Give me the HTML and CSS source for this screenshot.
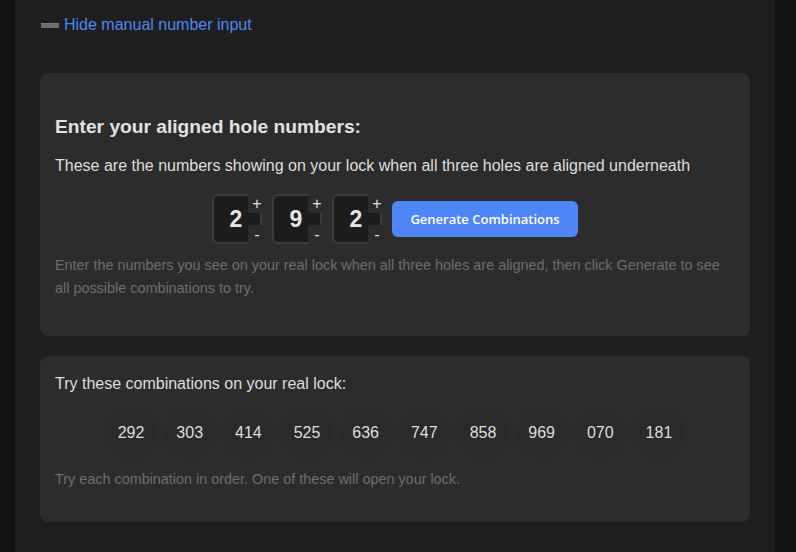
FILE: index.html
```html
<!DOCTYPE html>
<html>
<head>
<meta charset="utf-8">
<link rel="stylesheet" href="styles.css">
</head>
<body>
<div class="page">
  <div class="toggle"><span class="minus-icon"></span><span class="toggle-link">Hide manual number input</span></div>

  <section class="card card-input">
    <h3 class="title">Enter your aligned hole numbers:</h3>
    <p class="lead">These are the numbers showing on your lock when all three holes are aligned underneath</p>
    <div class="dial-row">
      <div class="dial"><span class="digit">2</span><span class="btn-up">+</span><span class="btn-down">-</span></div>
      <div class="dial"><span class="digit">9</span><span class="btn-up">+</span><span class="btn-down">-</span></div>
      <div class="dial"><span class="digit">2</span><span class="btn-up">+</span><span class="btn-down">-</span></div>
      <button class="generate">Generate Combinations</button>
    </div>
    <p class="help">Enter the numbers you see on your real lock when all three holes are aligned, then click Generate to see all possible combinations to try.</p>
  </section>

  <section class="card card-results">
    <p class="lead lead-results">Try these combinations on your real lock:</p>
    <div class="combos">
      <span class="combo">292</span>
      <span class="combo">303</span>
      <span class="combo">414</span>
      <span class="combo">525</span>
      <span class="combo">636</span>
      <span class="combo">747</span>
      <span class="combo">858</span>
      <span class="combo">969</span>
      <span class="combo">070</span>
      <span class="combo">181</span>
    </div>
    <p class="help help-results">Try each combination in order. One of these will open your lock.</p>
  </section>
</div>
</body>
</html>
```

FILE: styles.css
```css
html, body {
  margin: 0;
  padding: 0;
  background: #121212;
  font-family: "Liberation Sans", Arial, sans-serif;
  color: #dcdcdc;
  overflow: hidden;
}

.page {
  margin-left: 15px;
  width: 710px;
  height: 552px;
  padding: 0 25px;
  background: #1e1e1e;
  box-sizing: content-box;
  overflow: hidden;
}

.toggle {
  display: flex;
  align-items: center;
  height: 48px;
  font-size: 16px;
  padding-top: 2px;
  box-sizing: border-box;
}

.minus-icon {
  display: inline-block;
  width: 18px;
  height: 5px;
  background: #6b6b6b;
  border-top: 1px solid #7a7a7a;
  box-sizing: border-box;
  margin-right: 5px;
  margin-top: 1px;
  margin-left: 1px;
}

.toggle-link {
  color: #4f86f0;
}

.card {
  background: #2c2c2c;
  border-radius: 8px;
  padding: 0 15px;
}

.card-input {
  margin-top: 25px;
  height: 263px;
  box-sizing: border-box;
  padding-top: 43px;
}

.title {
  margin: 0;
  font-size: 19.2px;
  line-height: 22px;
  font-weight: bold;
  color: #e2e2e2;
}

.lead {
  margin: 18px 0 0 0;
  font-size: 16px;
  line-height: 20px;
  color: #dedede;
}

.dial-row {
  display: flex;
  justify-content: center;
  align-items: center;
  gap: 10px;
  margin-top: 18px;
}

.dial {
  position: relative;
  width: 50px;
  height: 50px;
  box-sizing: border-box;
  border: 2px solid #3c3c3c;
  border-radius: 6px;
  background: #1c1c1c;
  display: flex;
  align-items: center;
  justify-content: center;
  padding-right: 2px;
}

.digit {
  font-size: 23px;
  font-weight: bold;
  color: #e6e6e6;
}

.btn-up, .btn-down {
  position: absolute;
  right: -6px;
  width: 18px;
  height: 19px;
  background: #2c2c2c;
  border-radius: 3px;
  color: #e0e0e0;
  font-size: 16px;
  line-height: 19px;
  text-align: center;
}

.btn-up {
  top: -2px;
}

.btn-down {
  bottom: -2px;
}

.generate {
  width: 186px;
  height: 36px;
  border: none;
  border-radius: 6px;
  background: #4f86f7;
  color: #ffffff;
  font-family: "Open Sans", "Noto Sans", sans-serif;
  font-weight: 600;
  font-size: 13px;
  padding: 0;
}

.help {
  margin: 10px 0 0 0;
  font-size: 14.4px;
  line-height: 23px;
  color: #6e6e6e;
}

.card-results {
  margin-top: 20px;
  height: 166px;
  box-sizing: border-box;
  padding-top: 18px;
}

.lead-results {
  margin: 0;
}

.combos {
  display: flex;
  justify-content: center;
  gap: 8.67px;
  margin-top: 14px;
}

.combo {
  width: 50px;
  height: 50px;
  border-radius: 50%;
  background: #2a2a2a;
  display: flex;
  align-items: center;
  justify-content: center;
  font-size: 16px;
  color: #dedede;
}

.help-results {
  margin-top: 10px;
}
```
